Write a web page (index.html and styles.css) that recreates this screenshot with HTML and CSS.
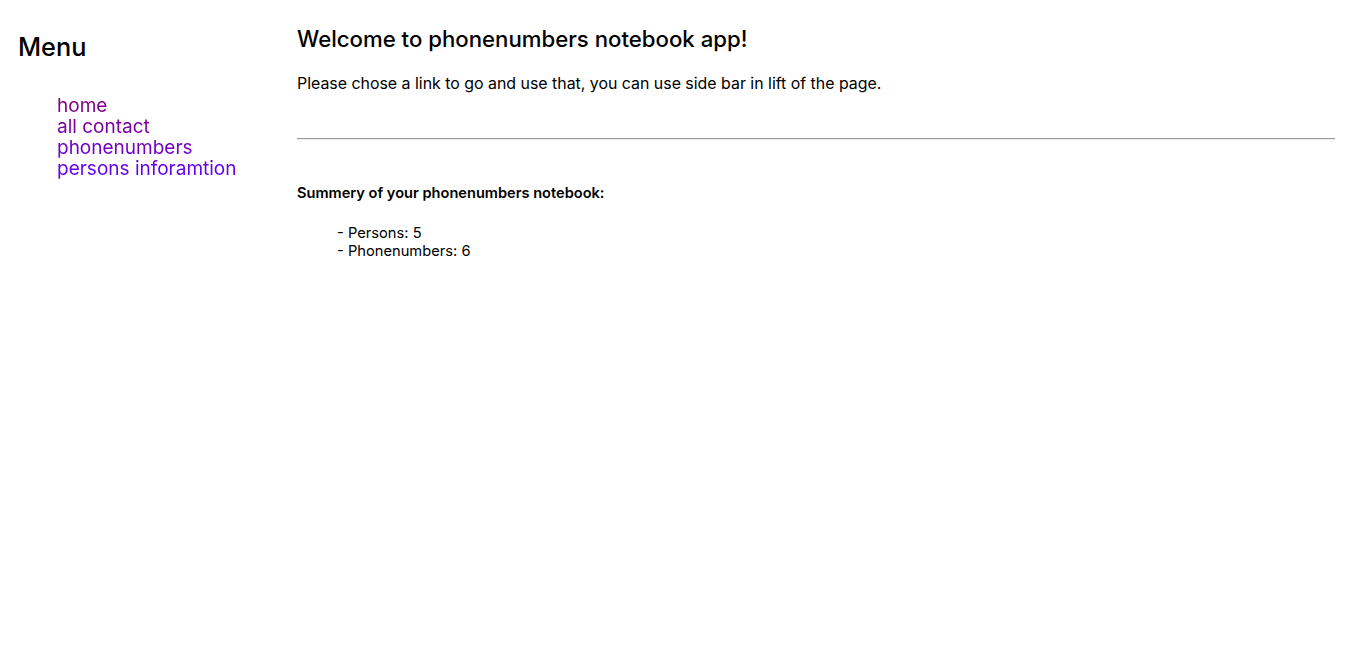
FILE: index.html
```html
<!DOCTYPE html>
<html lang="en">
<head>
<meta charset="utf-8">
<title>phonenumbers notebook</title>
<link rel="stylesheet" href="styles.css">
</head>
<body>
<div class="layout">
  <aside class="sidebar">
    <h1 class="menu-title">Menu</h1>
    <ul class="menu-list">
      <li><a href="#" class="menu-link">home</a></li>
      <li><a href="#" class="menu-link">all contact</a></li>
      <li><a href="#" class="menu-link">phonenumbers</a></li>
      <li><a href="#" class="menu-link">persons inforamtion</a></li>
    </ul>
  </aside>
  <main class="content">
    <h2 class="welcome">Welcome to phonenumbers notebook app!</h2>
    <p class="intro">Please chose a link to go and use that, you can use side bar in lift of the page.</p>
    <hr class="divider">
    <p class="summary-title">Summery of your phonenumbers notebook:</p>
    <ul class="summary-list">
      <li>- Persons: 5</li>
      <li>- Phonenumbers: 6</li>
    </ul>
  </main>
</div>
</body>
</html>
```
FILE: styles.css
```css
html, body {
  margin: 0;
  padding: 0;
  background: #ffffff;
}
body {
  font-family: Inter, "Liberation Sans", Arial, sans-serif;
  color: #000000;
}
.layout {
  display: flex;
  padding: 0 17px 0 18px;
}
.sidebar {
  width: 279px;
  flex: none;
}
.menu-title {
  margin: 32px 0 0 0;
  font-size: 25.3px;
  line-height: 30px;
  font-weight: 500;
}
.menu-list {
  list-style: none;
  margin: 33px 0 0 0;
  padding: 0 0 0 39px;
  font-size: 19px;
  line-height: 21px;
  width: max-content;
  background: linear-gradient(180deg, #820078 0%, #7a009c 35%, #7000c8 65%, #5e00ff 100%);
  -webkit-background-clip: text;
  background-clip: text;
  color: transparent;
}
.menu-link {
  text-decoration: none;
  color: transparent;
}
.content {
  flex: 1;
  min-width: 0;
}
.welcome {
  margin: 26px 0 0 0;
  font-size: 22.2px;
  line-height: 26px;
  font-weight: 500;
}
.intro {
  margin: 22px 0 0 0;
  font-size: 15.9px;
  line-height: 20px;
}
.divider {
  margin: 44px 0 0 0;
  border: 0;
  border-top: 1px solid #9a9a9a;
  border-bottom: 1px solid #eeeeee;
  height: 0;
}
.summary-title {
  margin: 44px 0 0 0;
  font-size: 14.6px;
  line-height: 18px;
  font-weight: 600;
}
.summary-list {
  list-style: none;
  margin: 22px 0 0 0;
  padding: 0 0 0 40px;
  font-size: 14.7px;
  line-height: 18px;
}
```
